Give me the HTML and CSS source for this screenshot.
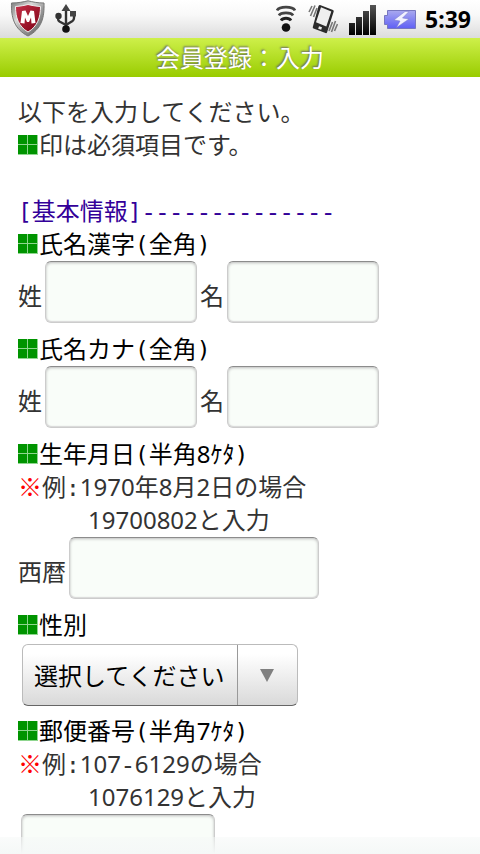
FILE: index.html
```html
<!DOCTYPE html>
<html lang="ja">
<head>
<meta charset="utf-8">
<meta name="viewport" content="width=device-width, initial-scale=1">
<title>会員登録：入力</title>
<link rel="stylesheet" href="styles.css">
</head>
<body>
<svg class="defs" aria-hidden="true">
  <defs>
    <symbol id="mark" viewBox="0 0 20 20">
      <path fill="#8fd68f" d="M0 0h20v20H0z"/>
      <path fill="#009400" d="M0 0h9v9H0zM10 0h9v9h-9zM0 10h9v9H0zM10 10h9v9h-9z"/>
    </symbol>
    <linearGradient id="dark" x1="0" y1="0" x2="0" y2="1"><stop offset="0" stop-color="#555"/><stop offset="1" stop-color="#000"/></linearGradient>
    <linearGradient id="steel" x1="0" y1="0" x2="1" y2="1"><stop offset="0" stop-color="#777"/><stop offset=".35" stop-color="#d8d8d8"/><stop offset=".6" stop-color="#999"/><stop offset="1" stop-color="#555"/></linearGradient>
    <linearGradient id="red" x1="0" y1="0" x2="1" y2="1"><stop offset="0" stop-color="#c7324a"/><stop offset="1" stop-color="#7c0014"/></linearGradient>
    <linearGradient id="cell" x1="0" y1="0" x2="0" y2="1"><stop offset="0" stop-color="#a9a9ef"/><stop offset="1" stop-color="#5f5ff5"/></linearGradient>
  </defs>
</svg>
<div class="phone">
  <div class="status">
    <svg class="shield" width="36" height="38" viewBox="0 0 36 38" aria-hidden="true">
      <path fill="url(#steel)" stroke="#777" d="M1.500 3C8 3 13 2 18 .8 23 2 27 3 34 3c.5 14-2 26-16 33C4 29 1 17 1.500 3z"/>
      <path fill="url(#red)" stroke="#eee" d="M5.500 6.500c5-.4 8.500-1 12.500-2 4 1 7.500 1.600 12.500 2 0 11-3 20-12.500 25.500C8.500 26.500 5.500 17.500 5.500 6.500z"/>
      <path fill="#fff" d="M12 11l3.500-.5L18 16l2.500-5.500L24 11l1.500 12-4 .5-.5-6-2 4.500h-2l-2-4.500-.5 6-4-.5z"/>
    </svg>
    <svg class="usb" width="22" height="30" viewBox="0 0 22 30" aria-hidden="true">
      <path fill="none" stroke="#333" stroke-width="2.400" d="M11 25V5M11 21l6.500-4q1.500-1 1.500-3V11M11 21l-6.500-3.500q-1.500-1-1.500-3v-2"/>
      <path fill="#444" d="M11 0l4.500 7h-9zM15 7h6v5.500h-6z"/>
      <circle cx="3.500" cy="12" r="3.200" fill="#333"/><circle cx="11" cy="25" r="3.800" fill="#111"/>
    </svg>
    <span class="spacer"></span>
    <svg class="wifi" width="20" height="28" viewBox="0 0 20 28" aria-hidden="true">
      <g fill="none" stroke="#444" stroke-width="2.800"><path d="M1 5.500C3 1 17 1 19 5.500"/><path d="M3 10.500C5 7 15 7 17 10.500"/><path d="M5 15.500C7 12.500 13 12.500 15 15.500" stroke="#222"/></g>
      <circle cx="10" cy="22.500" r="4.300" fill="#111"/>
    </svg>
    <svg class="vibrate" width="30" height="30" viewBox="0 0 30 30" aria-hidden="true">
      <path fill="#2b2b2b" d="M12 1l13 5q1 .5.700 1.500L19 28.500q-.5 1-1.500.5L5.500 24.500q-1-.5-.700-1.500L10.500 2Q11 1 12 1z"/>
      <path fill="#eee" d="M13 3.200L23.300 7.500 18.300 22.500 8 18.300zM11 22.200l3 1-.8 2.500-3-1z"/>
      <path fill="none" stroke="#777" stroke-width="1.600" d="M4 2L1 8M7 1.500L2.500 12M9 4L5.500 13M24.500 18L21 27M27.500 17l-4 11M29.500 20l-3 7"/>
    </svg>
    <svg class="signal" width="27" height="31" viewBox="0 0 27 31" aria-hidden="true">
      <path fill="url(#dark)" d="M0 19h6v12H0zM7 13h6v18H7zM14 7h6v24h-6zM21 1h6v30h-6z"/>
    </svg>
    <svg class="battery" width="32" height="19" viewBox="0 0 32 19" aria-hidden="true">
      <path fill="url(#cell)" stroke="#7777c0" d="M3.500.5h28v18h-28v-4h-3v-9h3z"/>
      <path fill="#f1f1ff" stroke="#7777c8" stroke-width=".5" d="M21 1.500L10 10l6 1-3.500 6.500L25 9l-6.500-1L25 1.500z"/>
    </svg>
    <time class="clock">5:39</time>
  </div>
  <h1 class="title">会員登録：入力</h1>
  <form class="content">
    <p class="line">以下を入力してください。</p>
    <p class="line marked"><svg class="mark"><use href="#mark"/></svg><span>印は必須項目です。</span></p>
    <h2 class="line section"><span class="mono">[</span>基本情報<span class="mono">]</span><span class="dashes">--------------</span></h2>

    <div class="line marked heading"><svg class="mark"><use href="#mark"/></svg><span>氏名漢字<span class="mono">(</span>全角<span class="mono">)</span></span></div>
    <div class="fields">
      <label for="sei">姓</label><input id="sei" class="short" type="text">
      <label for="mei">名</label><input id="mei" class="short" type="text">
    </div>

    <div class="line marked heading"><svg class="mark"><use href="#mark"/></svg><span>氏名カナ<span class="mono">(</span>全角<span class="mono">)</span></span></div>
    <div class="fields">
      <label for="sei-kana">姓</label><input id="sei-kana" class="short" type="text">
      <label for="mei-kana">名</label><input id="mei-kana" class="short" type="text">
    </div>

    <div class="line marked heading"><svg class="mark"><use href="#mark"/></svg><span>生年月日<span class="mono">(</span>半角8ｹﾀ<span class="mono">)</span></span></div>
    <p class="line"><span class="note">※</span>例<span class="mono">:</span>1970年8月2日の場合</p>
    <p class="line indent">19700802と入力</p>
    <div class="fields">
      <label for="birth">西暦</label><input id="birth" class="long" type="text">
    </div>

    <div class="line marked heading"><svg class="mark"><use href="#mark"/></svg><label for="sex">性別</label></div>
    <div class="select">
      <select id="sex"><option>選択してください</option><option>男性</option><option>女性</option></select>
    </div>

    <div class="line marked heading"><svg class="mark"><use href="#mark"/></svg><label for="zip">郵便番号<span class="mono">(</span>半角7ｹﾀ<span class="mono">)</span></label></div>
    <p class="line"><span class="note">※</span>例<span class="mono">:</span>107<span class="dashes">-</span>6129の場合</p>
    <p class="line indent">1076129と入力</p>
    <div class="fields bare"><input id="zip" class="medium" type="text"></div>
  </form>
  <div class="fade"></div>
</div>
</body>
</html>
```
FILE: styles.css
```css
* {
  box-sizing: border-box;
}

body,
h1,
h2,
p {
  margin: 0;
  font-weight: 400;
}

body {
  background: #fff;
  color: #333;
  font: 24px/33px "Noto Sans", "Noto Sans CJK JP", sans-serif;
}

.defs {
  position: absolute;
  width: 0;
  height: 0;
}

.phone {
  position: relative;
  display: flex;
  flex-direction: column;
  height: 100vh;
  overflow: hidden;
}

.status {
  display: flex;
  flex: none;
  align-items: center;
  height: 38px;
  padding: 0 9px 0 10px;
  background: linear-gradient(#fff, #f8f8f8 40%, #dcdcdc);
}

.status svg {
  flex: none;
}

.usb {
  margin-left: 9px;
}

.spacer {
  flex: 1;
}

.vibrate {
  margin-left: 12px;
}

.signal {
  margin-left: 11px;
}

.battery {
  margin-left: 8px;
}

.clock {
  margin-left: 9px;
  color: #000;
  font-family: "Noto Sans", sans-serif;
  font-size: 23px;
  font-weight: 700;
}

.title {
  flex: none;
  height: 39px;
  background: linear-gradient(#cef04a, #99cc00);
  color: #fff;
  font-size: 24px;
  line-height: 39px;
  text-align: center;
  text-shadow: -1px -1px 2px #666;
}

.content {
  flex: 1;
  min-height: 0;
  padding: 18px 18px 0;
  overflow-y: auto;
  scrollbar-width: none;
}

.line {
  height: 33px;
  font-size: 24px;
  white-space: nowrap;
}

.marked {
  display: flex;
  align-items: center;
}

.mark {
  flex: none;
  width: 20px;
  height: 20px;
  margin-right: 1px;
}

.section {
  margin-top: 33px;
  color: #330099;
}

.heading {
  color: #000;
}

.mono {
  font-family: "DejaVu Sans Mono", monospace;
  font-size: 23px;
  line-height: 1;
}

.dashes {
  font-family: "Liberation Mono", monospace;
  font-size: 23px;
  line-height: 1;
}

.note {
  color: #f00;
  font-family: "Noto Sans CJK JP", sans-serif;
  line-height: 1;
}

.indent {
  padding-left: 70px;
}

.fields {
  display: flex;
  gap: 3px;
  height: 72px;
  padding-top: 1px;
}

.fields label {
  margin-top: 18px;
}

.bare {
  padding-left: 3px;
}

input {
  height: 62px;
  padding: 0 10px;
  border: 1px solid #ccc;
  border-top-color: #8c8c8c;
  border-radius: 6px;
  background: #f9fdf9;
  box-shadow: inset 0 1px 3px #bbb, inset 0 -1px 1px #ddd;
  color: #000;
  font: inherit;
}

.short {
  width: 152px;
}

.medium {
  width: 194px;
}

.long {
  width: 250px;
}

.select {
  position: relative;
  width: 276px;
  margin: 3px 0 8px 4px;
}

.select select {
  display: block;
  width: 100%;
  height: 62px;
  padding: 0 61px 0 11px;
  appearance: none;
  border: 1px solid #bbb;
  border-bottom-color: #666;
  border-radius: 6px;
  background: linear-gradient(#fff 15%, #d9d9d9);
  color: #000;
  font: inherit;
}

.select::before {
  position: absolute;
  top: 1px;
  bottom: 1px;
  right: 60px;
  border-left: 1px solid #999;
  content: "";
}

.select::after {
  position: absolute;
  top: 25px;
  right: 24px;
  border: 7px solid transparent;
  border-top: 13px solid #808080;
  border-bottom: 0;
  content: "";
}

.fade {
  position: absolute;
  right: 0;
  bottom: 0;
  left: 0;
  height: 17px;
  background: linear-gradient(rgba(245, 248, 247, 0.5), #f5f8f7);
  pointer-events: none;
}
```
